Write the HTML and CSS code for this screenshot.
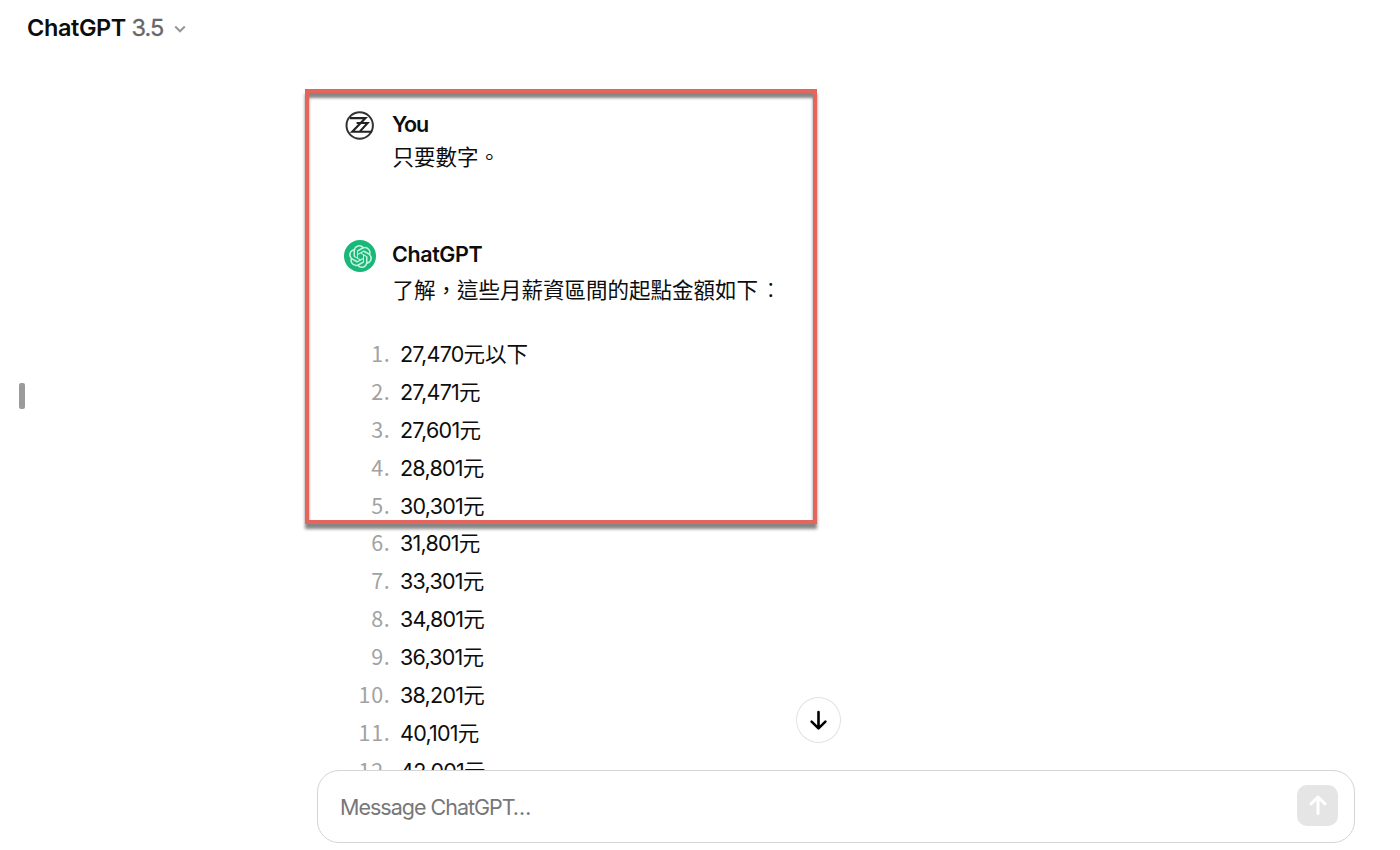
FILE: index.html
```html
<!DOCTYPE html>
<html lang="zh-Hant">
<head>
<meta charset="utf-8">
<title>ChatGPT</title>
<link rel="stylesheet" href="styles.css">
</head>
<body>
<header class="topbar">
  <span class="model">ChatGPT</span><span class="version">3.5</span>
  <svg class="chevron" viewBox="0 0 14 10"><path d="M2.2 2.5 7 7.2l4.8-4.7"/></svg>
</header>
<div class="sidebar-handle"></div>
<main class="thread">
  <section class="message user">
    <svg class="avatar" viewBox="0 0 32 32">
      <circle class="ring" cx="15.7" cy="15.5" r="13.2"/>
      <path class="zed" d="M6 8.1H21.5L8.2 21.8H28M12.6 13H23.6L16 21.4"/>
    </svg>
    <div class="body">
      <h2 class="author">You</h2>
      <p class="text">只要數字。</p>
    </div>
  </section>
  <section class="message bot">
    <div class="avatar green">
      <svg viewBox="0 0 24 24"><path d="M22.2819 9.8211a5.9847 5.9847 0 0 0-.5157-4.9108 6.0462 6.0462 0 0 0-6.5098-2.9A6.0651 6.0651 0 0 0 4.9807 4.1818a5.9847 5.9847 0 0 0-3.9977 2.9 6.0462 6.0462 0 0 0 .7427 7.0966 5.98 5.98 0 0 0 .511 4.9107 6.051 6.051 0 0 0 6.5146 2.9001A5.9847 5.9847 0 0 0 13.2599 24a6.0557 6.0557 0 0 0 5.7718-4.2058 5.9894 5.9894 0 0 0 3.9977-2.9001 6.0557 6.0557 0 0 0-.7475-7.0729zm-9.022 12.6081a4.4755 4.4755 0 0 1-2.8764-1.0408l.1419-.0804 4.7783-2.7582a.7948.7948 0 0 0 .3927-.6813v-6.7369l2.02 1.1686a.071.071 0 0 1 .038.052v5.5826a4.504 4.504 0 0 1-4.4945 4.4944zm-9.6607-4.1254a4.4708 4.4708 0 0 1-.5346-3.0137l.142.0852 4.783 2.7582a.7712.7712 0 0 0 .7806 0l5.8428-3.3685v2.3324a.0804.0804 0 0 1-.0332.0615L9.74 19.9502a4.4992 4.4992 0 0 1-6.1408-1.6464zM2.3408 7.8956a4.485 4.485 0 0 1 2.3655-1.9728V11.6a.7664.7664 0 0 0 .3879.6765l5.8144 3.3543-2.0201 1.1685a.0757.0757 0 0 1-.071 0l-4.8303-2.7865A4.504 4.504 0 0 1 2.3408 7.872zm16.5963 3.8558L13.1038 8.364 15.1192 7.2a.0757.0757 0 0 1 .071 0l4.8303 2.7913a4.4944 4.4944 0 0 1-.6765 8.1042v-5.6772a.79.79 0 0 0-.407-.667zm2.0107-3.0231l-.142-.0852-4.7735-2.7818a.7759.7759 0 0 0-.7854 0L9.409 9.2297V6.8974a.0662.0662 0 0 1 .0284-.0615l4.8303-2.7866a4.4992 4.4992 0 0 1 6.6802 4.66zM8.3065 12.863l-2.02-1.1638a.0804.0804 0 0 1-.038-.0567V6.0742a4.4992 4.4992 0 0 1 7.3757-3.4537l-.142.0805L8.704 5.459a.7948.7948 0 0 0-.3927.6813zm1.0976-2.3654l2.602-1.4998 2.6069 1.4998v2.9994l-2.5974 1.4997-2.6067-1.4997Z"/></svg>
    </div>
    <div class="body">
      <h2 class="author">ChatGPT</h2>
      <p class="text">了解，這些月薪資區間的起點金額如下<span class="colon">：</span></p>
    </div>
  </section>
  <ol class="amounts">
    <li><span class="num">1.</span><span class="val">27,470</span>元以下</li>
    <li><span class="num">2.</span><span class="val">27,471</span>元</li>
    <li><span class="num">3.</span><span class="val">27,601</span>元</li>
    <li><span class="num">4.</span><span class="val">28,801</span>元</li>
    <li><span class="num">5.</span><span class="val">30,301</span>元</li>
    <li><span class="num">6.</span><span class="val">31,801</span>元</li>
    <li><span class="num">7.</span><span class="val">33,301</span>元</li>
    <li><span class="num">8.</span><span class="val">34,801</span>元</li>
    <li><span class="num">9.</span><span class="val">36,301</span>元</li>
    <li><span class="num">10.</span><span class="val">38,201</span>元</li>
    <li><span class="num">11.</span><span class="val">40,101</span>元</li>
    <li><span class="num">12.</span><span class="val">42,001</span>元</li>
  </ol>
</main>
<div class="highlight"></div>
<button class="scroll-down" aria-label="Scroll down">
  <svg viewBox="0 0 24 24"><path d="M12 3.2v17M4.8 13.2l7.2 7 7.2-7"/></svg>
</button>
<footer class="composer">
  <span class="placeholder">Message ChatGPT…</span>
  <button class="send" aria-label="Send">
    <svg viewBox="0 0 24 24"><path d="M12 20.5V4M5 10.8 12 4l7 6.8"/></svg>
  </button>
</footer>
</body>
</html>
```
FILE: styles.css
```css
* { box-sizing: border-box; margin: 0; padding: 0; }
body {
  position: relative;
  width: 1400px;
  height: 850px;
  overflow: hidden;
  background: #fff;
  color: #0d0d0d;
  font-family: Inter, "Noto Sans CJK TC", sans-serif;
  font-size: 21.5px;
  display: flex;
  flex-direction: column;
}
button { font: inherit; border: 0; background: none; display: flex; align-items: center; justify-content: center; }
svg { display: block; }
.topbar { height: 57px; flex: none; padding-left: 27px; display: flex; align-items: center; font-size: 23.5px; line-height: 30px; }
.model { font-weight: 600; letter-spacing: -.4px; width: 104.5px; margin-top: -1px; }
.version { color: #676767; letter-spacing: -.9px; width: 41.5px; margin-top: -1px; -webkit-text-stroke: .3px #676767; }
.chevron { width: 14px; height: 10px; fill: none; stroke: #9a9a9a; stroke-width: 2.2; }
.sidebar-handle { position: absolute; left: 19px; top: 383px; width: 6px; height: 26px; border-radius: 2px; background: #9b9b9b; }
.thread { flex: 1; min-height: 0; overflow: hidden; padding: 51px 0 0 344px; }
.message { display: flex; gap: 16px; }
.message.user { height: 130px; }
.message.bot { height: 98px; }
.avatar { flex: none; width: 32px; height: 32px; }
.user .avatar { margin-top: 2px; }
.ring { fill: none; stroke: #333; stroke-width: 2; }
.zed { fill: none; stroke: #222; stroke-width: 2.1; }
.green { margin-top: 2px; border-radius: 50%; background: #19b87a; display: flex; align-items: center; justify-content: center; }
.green svg { width: 23px; height: 23px; fill: #c9f2df; }
.author { font-size: 21.5px; font-weight: 600; line-height: 32px; letter-spacing: -.5px; }
.bot .author { letter-spacing: -.4px; }
.user .author { letter-spacing: -1.2px; }
.text { line-height: 32px; white-space: nowrap; padding-left: .5px; }
.colon { font-weight: 300; font-family: "Noto Sans CJK TC", sans-serif; margin-left: 2px; }
.user .text { margin-top: 1px; }
.bot .text { margin-top: 3px; }
.amounts { list-style: none; }
.amounts li { display: flex; height: 37.9px; line-height: 37.9px; }
.num { width: 46.5px; margin: -2px 9.5px 0 0; text-align: right; color: #a2a2a2; font-family: "Noto Sans CJK TC", sans-serif; letter-spacing: .7px; }
.val { letter-spacing: -.75px; }
.highlight {
  position: absolute; left: 305px; top: 89px; width: 512px; height: 435px;
  border: 4px solid #e5645b;
  box-shadow: 0 5px 3px rgba(0,0,0,.48), inset 0 5px 3px rgba(0,0,0,.48);
}
.scroll-down { position: absolute; left: 796px; top: 697px; width: 45px; height: 46px; border: 1px solid #e2e2e2; border-radius: 50%; background: #fff; }
.scroll-down svg { width: 23px; height: 23px; fill: none; stroke: #000; stroke-width: 2.7; stroke-linecap: round; stroke-linejoin: round; }
.composer { flex: none; width: 1038px; height: 73px; margin: 0 0 7px 317px; padding: 0 16px 0 22px; border: 1px solid #d5d5d5; border-radius: 22px; background: #fff; display: flex; align-items: center; justify-content: space-between; }
.placeholder { color: #777; letter-spacing: -1px; }
.send { width: 41px; height: 41px; margin-top: -3px; border-radius: 10px; background: #e5e5e5; }
.send svg { width: 24px; height: 24px; fill: none; stroke: #fff; stroke-width: 3; stroke-linecap: round; stroke-linejoin: round; }
```
